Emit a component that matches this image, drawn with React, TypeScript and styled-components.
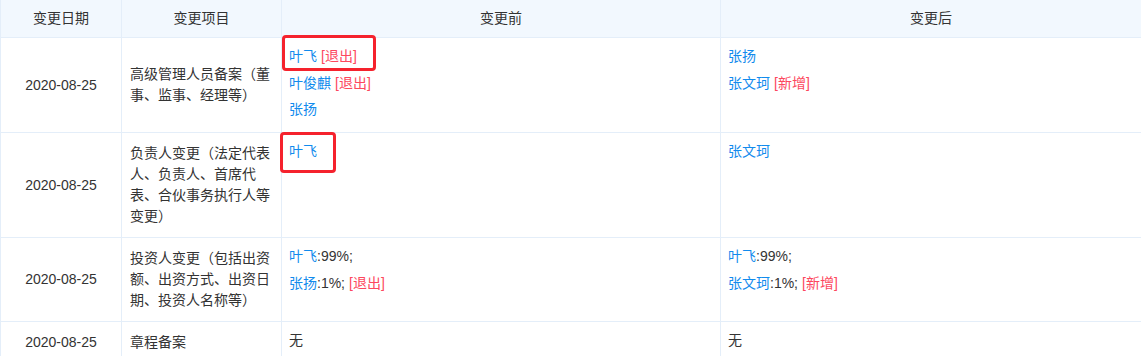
import styled, { createGlobalStyle } from "styled-components";

const GlobalStyle = createGlobalStyle`
  html, body {
    margin: 0;
    padding: 0;
    background: #fff;
  }
  body {
    font-family: "Liberation Sans", "Noto Sans CJK SC", sans-serif;
    font-size: 14px;
    color: #333;
  }
`;

type Entry = { name: string; share?: string; tag?: "退出" | "新增" };

type Row = {
  date: string;
  item: string;
  before: Entry[];
  after: Entry[];
  plain?: boolean;
};

const rows: Row[] = [
  {
    date: "2020-08-25",
    item: "高级管理人员备案（董事、监事、经理等）",
    before: [
      { name: "叶飞", tag: "退出" },
      { name: "叶俊麒", tag: "退出" },
      { name: "张扬" },
    ],
    after: [{ name: "张扬" }, { name: "张文珂", tag: "新增" }],
  },
  {
    date: "2020-08-25",
    item: "负责人变更（法定代表人、负责人、首席代表、合伙事务执行人等变更）",
    before: [{ name: "叶飞" }],
    after: [{ name: "张文珂" }],
  },
  {
    date: "2020-08-25",
    item: "投资人变更（包括出资额、出资方式、出资日期、投资人名称等）",
    before: [
      { name: "叶飞", share: ":99%;" },
      { name: "张扬", share: ":1%;", tag: "退出" },
    ],
    after: [
      { name: "叶飞", share: ":99%;" },
      { name: "张文珂", share: ":1%;", tag: "新增" },
    ],
  },
  {
    date: "2020-08-25",
    item: "章程备案",
    before: [{ name: "无" }],
    after: [{ name: "无" }],
    plain: true,
  },
];

const Page = styled.div`
  position: relative;
  width: 1141px;
`;

const Table = styled.table`
  width: 1141px;
  table-layout: fixed;
  border-collapse: collapse;
`;

const HeadCell = styled.th`
  background: #f2f8fe;
  border: 1px solid #e4eef9;
  border-top: none;
  padding: 8px 8px;
  line-height: 21px;
  font-weight: 400;
  text-align: center;
  color: #333;
`;

const Cell = styled.td<{ $align?: "center" | "left"; $valign?: "middle" | "top" }>`
  border: 1px solid #e4eef9;
  padding: ${(p) => (p.$valign === "top" ? "8px 8px 12px" : "10px 8px")};
  line-height: 21px;
  text-align: ${(p) => p.$align ?? "left"};
  vertical-align: ${(p) => p.$valign ?? "middle"};
  word-break: break-all;
`;

const List = styled.div`
  display: flex;
  flex-direction: column;
  gap: 5.5px;
  margin-left: -1px;
`;

const Line = styled.div`
  line-height: 21px;
  white-space: nowrap;
`;

const Name = styled.span<{ $plain?: boolean }>`
  color: ${(p) => (p.$plain ? "#333" : "#128bed")};
`;

const Tag = styled.span`
  color: #fd485e;
  margin-left: 4px;
`;

const Mark = styled.div`
  position: absolute;
  border: 3px solid #f5222d;
  border-radius: 4px;
  box-sizing: border-box;
  pointer-events: none;
`;

const Entries = ({ list, plain }: { list: Entry[]; plain?: boolean }) => (
  <List>
    {list.map((e, i) => (
      <Line key={i}>
        <Name $plain={plain}>{e.name}</Name>
        {e.share}
        {e.tag && <Tag>[{e.tag}]</Tag>}
      </Line>
    ))}
  </List>
);

export default function App() {
  return (
    <Page>
      <GlobalStyle />
      <Table>
        <colgroup>
          <col style={{ width: 121 }} />
          <col style={{ width: 160 }} />
          <col style={{ width: 439 }} />
          <col style={{ width: 421 }} />
        </colgroup>
        <thead>
          <tr>
            <HeadCell>变更日期</HeadCell>
            <HeadCell>变更项目</HeadCell>
            <HeadCell>变更前</HeadCell>
            <HeadCell>变更后</HeadCell>
          </tr>
        </thead>
        <tbody>
          {rows.map((r, i) => (
            <tr key={i}>
              <Cell $align="center">{r.date}</Cell>
              <Cell>{r.item}</Cell>
              <Cell $valign="top">
                <Entries list={r.before} plain={r.plain} />
              </Cell>
              <Cell $valign="top">
                <Entries list={r.after} plain={r.plain} />
              </Cell>
            </tr>
          ))}
        </tbody>
      </Table>
      <Mark style={{ left: 282, top: 35, width: 94, height: 36 }} />
      <Mark style={{ left: 280, top: 132, width: 56, height: 41 }} />
    </Page>
  );
}
